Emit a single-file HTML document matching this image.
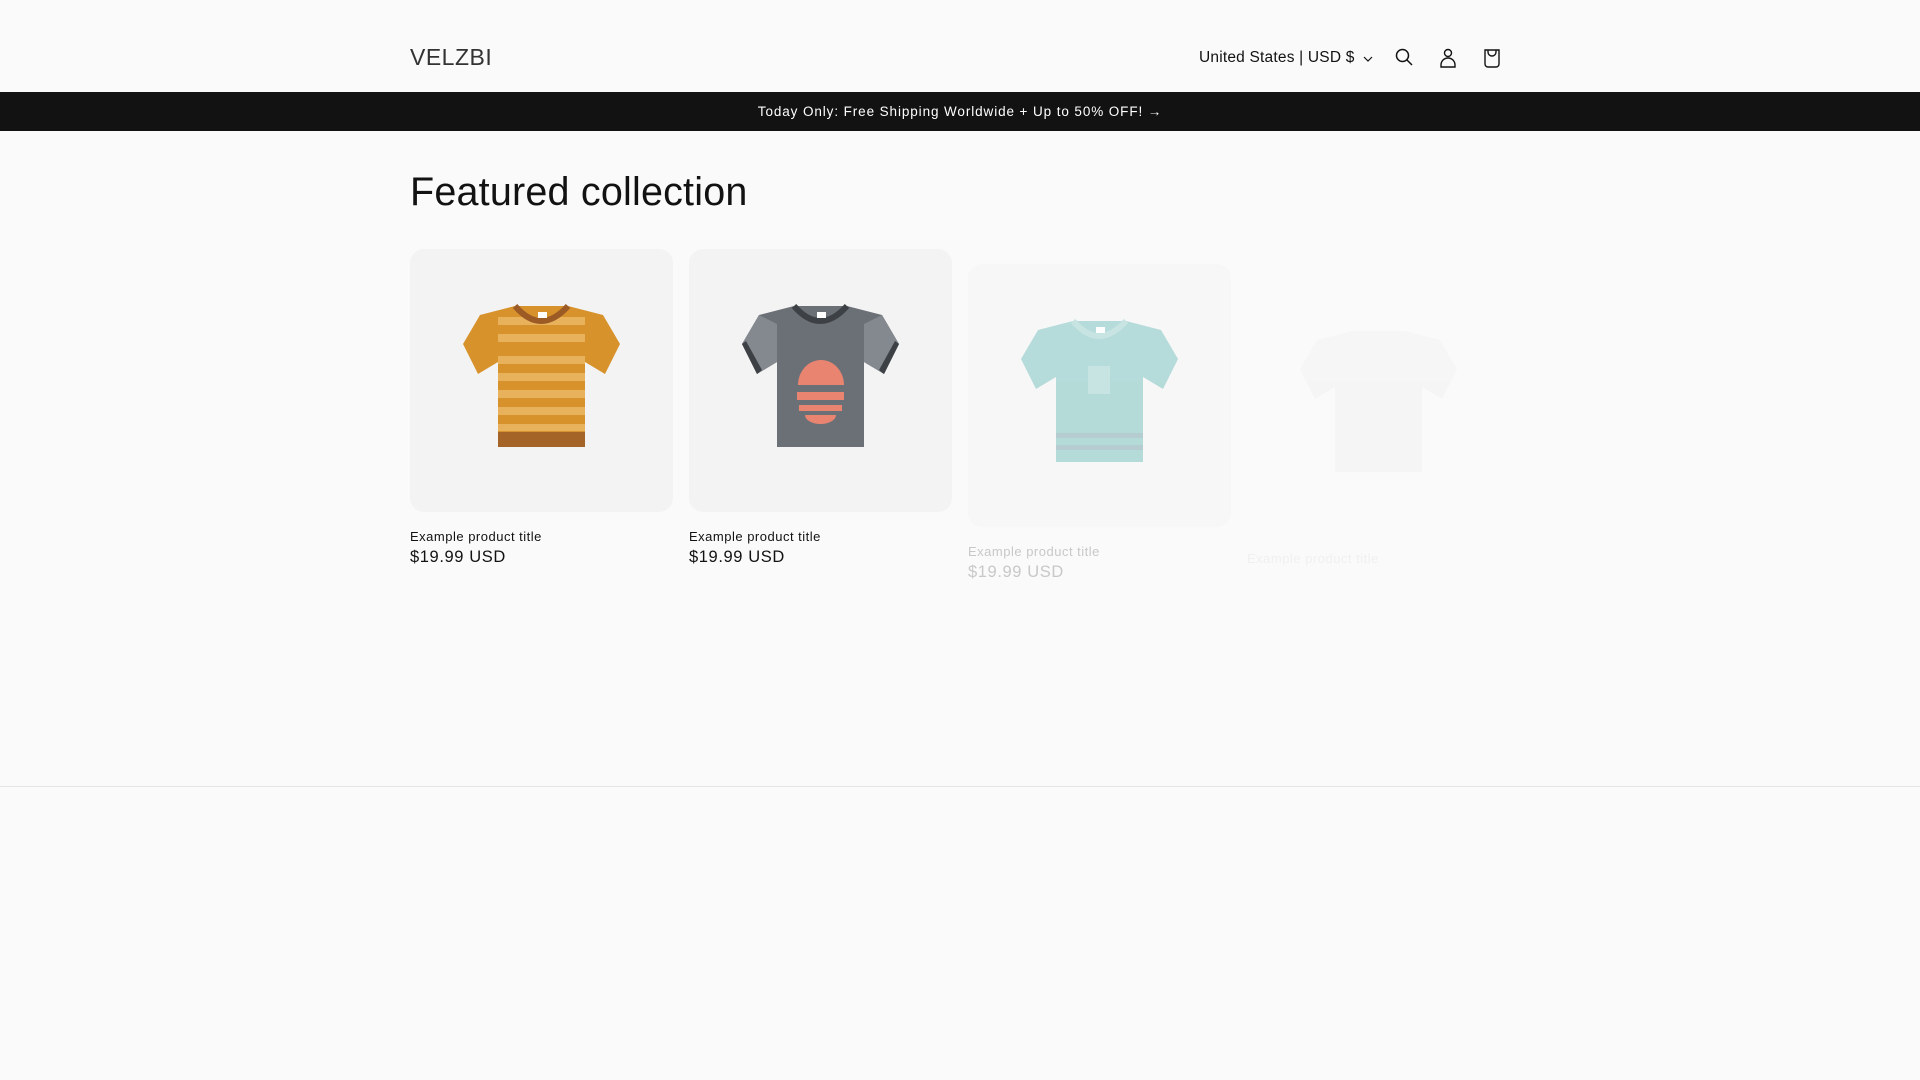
<!DOCTYPE html>
<html><head><meta charset="utf-8"><style>
*{margin:0;padding:0;box-sizing:border-box}
body{width:1920px;height:1080px;background:#fafafa;font-family:"Liberation Sans",sans-serif;color:#121212;overflow:hidden;position:relative}
.hdr{position:absolute;top:0;left:0;width:1920px;height:92px}
.logo{position:absolute;left:410px;top:44px;font-size:23px;color:#333;letter-spacing:.5px}
.loc{position:absolute;left:1199px;top:49px;font-size:15.5px;color:#121212;letter-spacing:.2px}
.ico{position:absolute;top:48px}
.ban{position:absolute;top:92px;left:0;width:1920px;height:39px;background:#121212;color:#fff;font-size:13.5px;text-align:center;line-height:39px;letter-spacing:.9px}
h1{position:absolute;left:410px;top:170px;font-size:39.5px;font-weight:400;letter-spacing:.2px}
.card{position:absolute;width:263px;height:263px;background:#f3f3f3;border-radius:14px;overflow:hidden}
.t{position:absolute;font-size:13px;letter-spacing:.5px}
.p{position:absolute;font-size:16.5px;letter-spacing:.6px}
.div{position:absolute;top:786px;left:0;width:1920px;height:1px;background:#e4e4e4}
</style></head><body>
<div class="hdr">
<div class="logo">VELZBI</div>
<div class="loc">United States | USD $</div>
<svg class="ico" style="left:1363px;top:55px" width="10" height="8" viewBox="0 0 10 8"><path d="M1 2l4 4 4-4" fill="none" stroke="#121212" stroke-width="1.2"/></svg>
<svg class="ico" style="left:1395px" width="18" height="18" viewBox="0 0 18 18"><circle cx="7.5" cy="7.5" r="6" fill="none" stroke="#121212" stroke-width="1.5"/><path d="M12 12l5 5" stroke="#121212" stroke-width="1.5"/></svg>
<svg class="ico" style="left:1439px" width="18" height="20" viewBox="0 0 18 20"><circle cx="9" cy="5" r="3.5" fill="none" stroke="#121212" stroke-width="1.4"/><path d="M2 19v-2a7 7 0 0 1 14 0v2z" fill="none" stroke="#121212" stroke-width="1.4"/></svg>
<svg class="ico" style="left:1483px" width="18" height="20" viewBox="0 0 18 20"><path d="M2 2h14v14a3 3 0 0 1-3 3H5a3 3 0 0 1-3-3z" fill="none" stroke="#121212" stroke-width="1.4"/><path d="M5 2v2a4 4 0 0 0 8 0V2" fill="none" stroke="#121212" stroke-width="1.4"/></svg>
</div>
<div class="ban">Today Only: Free Shipping Worldwide + Up to 50% OFF! →</div>
<h1>Featured collection</h1>

<div class="card" style="left:410px;top:249px">
<svg width="263" height="263" viewBox="0 0 263 263">
<path d="M105 57L70 66L53 95L68 125L88 113V198H175V113L195 125L210 95L193 66L158 57Z" fill="#d8922c"/>
<g fill="#e8b25c"><rect x="88" y="68" width="87" height="8"/><rect x="88" y="85" width="87" height="8"/><rect x="88" y="107" width="87" height="8"/><rect x="88" y="124" width="87" height="8"/><rect x="88" y="141" width="87" height="8"/><rect x="88" y="158" width="87" height="8"/><rect x="88" y="175" width="87" height="7"/></g>
<rect x="88" y="183" width="87" height="15" fill="#a46428"/>
<path d="M105 57q26 30 53 0" fill="none" stroke="#9c5a25" stroke-width="6"/>
<rect x="128" y="63" width="9" height="6" fill="#fff"/>
</svg></div>

<div class="card" style="left:689px;top:249px">
<svg width="263" height="263" viewBox="0 0 263 263">
<path d="M105 57L70 66L53 95L68 125L88 113V198H175V113L195 125L210 95L193 66L158 57Z" fill="#6b7076"/>
<path d="M70 66L53 95L68 125L88 113V75zM193 66L210 95L195 125L175 113V75z" fill="#84898f"/>
<path d="M53 95L68 125L73 121L57 92zM210 95L195 125L190 121L206 92z" fill="#3d4145"/>
<path d="M109 136a23 25 0 0 1 46 0z" fill="#e98470"/>
<rect x="108" y="143" width="47" height="8" fill="#e98470"/>
<rect x="110" y="156" width="43" height="6" fill="#e98470"/>
<path d="M116 166h31a15.5 9 0 0 1-31 0z" fill="#e98470"/>
<path d="M105 57q26 30 53 0" fill="none" stroke="#3d4145" stroke-width="6"/>
<rect x="128" y="63" width="9" height="6" fill="#fff"/>
</svg></div>

<div class="card" style="left:968px;top:264px;background:#f7f7f7">
<svg width="263" height="263" viewBox="0 0 263 263" opacity=".75">
<path d="M105 57L70 66L53 95L68 125L88 113V198H175V113L195 125L210 95L193 66L158 57Z" fill="#9fd2d0"/>
<rect x="120" y="102" width="22" height="28" fill="#b7dedc"/>
<rect x="88" y="169" width="87" height="5" fill="#9fbfc4"/><rect x="88" y="181" width="87" height="5" fill="#9fbfc4"/>
<path d="M105 57q26 30 53 0" fill="none" stroke="#b7dedc" stroke-width="6"/>
<rect x="128" y="63" width="9" height="6" fill="#fff"/>
</svg></div>

<div class="card" style="left:1247px;top:274px;background:#fafafa">
<svg width="263" height="263" viewBox="0 0 263 263" opacity=".4">
<path d="M105 57L70 66L53 95L68 125L88 113V198H175V113L195 125L210 95L193 66L158 57Z" fill="#f0f0f0"/>
</svg></div>

<div class="t" style="left:410px;top:529px">Example product title</div>
<div class="p" style="left:410px;top:548px">$19.99 USD</div>
<div class="t" style="left:689px;top:529px">Example product title</div>
<div class="p" style="left:689px;top:548px">$19.99 USD</div>
<div class="t" style="left:968px;top:544px;color:#c8c8c8">Example product title</div>
<div class="p" style="left:968px;top:563px;color:#c8c8c8">$19.99 USD</div>
<div class="t" style="left:1247px;top:551px;color:#f0f0f0">Example product title</div>

<div class="div"></div>
</body></html>
